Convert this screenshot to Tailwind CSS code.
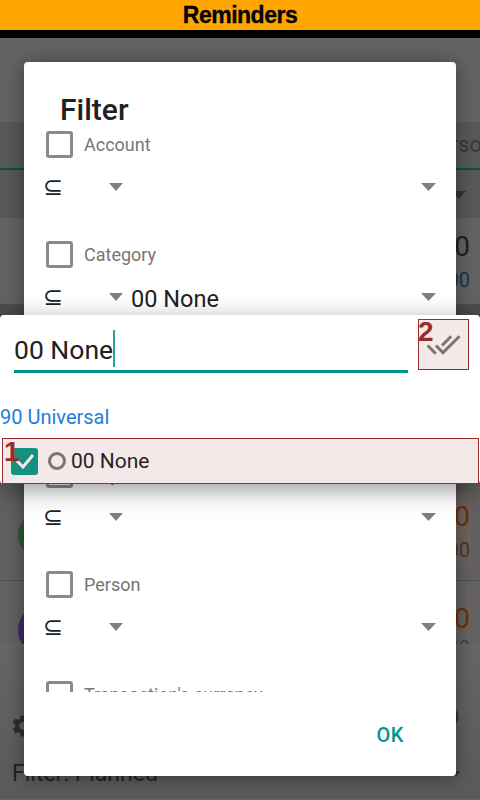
<!DOCTYPE html>
<html lang="en">
<head>
    <meta charset="UTF-8">
    <title>Reminders</title>
    <script src="https://cdn.jsdelivr.net/npm/@tailwindcss/browser@4"></script>
</head>
<body class="font-['Roboto',sans-serif] overflow-hidden bg-[#636363]">
<div class="relative w-[480px] h-[800px] overflow-hidden">

    <!-- app behind the dialog -->
    <header class="h-[38px] bg-[#ffa500] border-b-[8px] border-black text-center font-['Liberation_Sans',sans-serif] font-bold text-[23px] leading-[30px] text-black tracking-[-0.5px] [-webkit-text-stroke:0.3px_black]">Reminders</header>
    <div class="h-[84px] bg-[#636363]"></div>
    <div class="h-[48px] bg-[#585858] border-b-2 border-[#0b4f49] overflow-hidden pl-[451px] text-[21.5px] leading-[46px] text-[#383838] whitespace-nowrap">rson</div>
    <div class="h-[48px] bg-[#585858] pl-[452px] pt-[21px]">
        <svg class="block" width="14" height="8"><path d="M0 0h14L7 8z" fill="#333"/></svg>
    </div>
    <div class="h-[86px] bg-[#636363] pr-[10px] text-right">
        <div class="text-[28px] leading-[34px] pt-[12px] h-[50px] text-[#1f1f1f]">0</div>
        <div class="text-[20px] leading-[24px] text-[#1c3050]">00</div>
    </div>
    <div class="h-[16px] bg-[#4e4e4e]"></div>
    <div class="h-[261px] bg-[#616161] border-b border-[#505050] flex flex-col justify-end">
        <div class="flex items-center justify-between h-[91px] pl-[18px] pr-[9px]">
            <span class="w-[50px] h-[50px] rounded-full bg-[#2f5a30]"></span>
            <div class="w-[26px] h-[74px] bg-[#6e635c] mb-[9px] text-right pr-[1px]">
                <div class="text-[28px] leading-[34px] text-[#6b3208] mt-[7px]">0</div>
                <div class="text-[20px] leading-[24px] text-[#3a3a3a] mt-[4px]">00</div>
            </div>
        </div>
    </div>
    <div class="h-[63px] bg-[#636363] overflow-hidden flex justify-between pl-[18px] pr-[9px]">
        <span class="mt-[24px] w-[50px] h-[50px] rounded-full bg-[#3e2a66]"></span>
        <div class="w-[4px] h-[63px] bg-[#6e635c] relative">
            <div class="absolute right-[1px] top-[21px] text-[28px] leading-[34px] text-[#6b3208]">0</div>
            <div class="absolute right-[1px] top-[55px] text-[20px] leading-[24px] text-[#444]">00</div>
        </div>
    </div>
    <div class="h-[155px] bg-gradient-to-b from-[#666666] to-[#5a5a5a]">
        <div class="flex items-center justify-between pl-[10px] pr-[20px] pt-[52px] h-[112px]">
            <svg width="26" height="26" viewBox="0 0 24 24" fill="#2e2e2e"><path d="M19.14 12.94c.04-.3.06-.61.06-.94 0-.32-.02-.64-.07-.94l2.03-1.58c.18-.14.23-.41.12-.61l-1.92-3.32c-.12-.22-.37-.29-.59-.22l-2.39.96c-.5-.38-1.03-.7-1.62-.94l-.36-2.54c-.04-.24-.24-.41-.48-.41h-3.84c-.24 0-.43.17-.47.41l-.36 2.54c-.59.24-1.13.57-1.62.94l-2.39-.96c-.22-.08-.47 0-.59.22L2.74 8.87c-.12.21-.08.47.12.61l2.03 1.58c-.05.3-.09.63-.09.94s.02.64.07.94l-2.03 1.58c-.18.14-.23.41-.12.61l1.92 3.32c.12.22.37.29.59.22l2.39-.96c.5.38 1.03.7 1.62.94l.36 2.54c.05.24.24.41.48.41h3.84c.24 0 .44-.17.47-.41l.36-2.54c.59-.24 1.13-.56 1.62-.94l2.39.96c.22.08.47 0 .59-.22l1.92-3.32c.12-.22.07-.47-.12-.61l-2.01-1.58zM12 15.6c-1.98 0-3.6-1.62-3.6-3.6s1.62-3.6 3.6-3.6 3.6 1.62 3.6 3.6-1.62 3.6-3.6 3.6z"/></svg>
            <span class="text-[36px] leading-[36px] mb-[24px] text-[#333]">6</span>
        </div>
        <div class="flex items-center justify-between pl-[12px] pr-[20px] h-[30px] mt-[3px]">
            <span class="text-[23px] leading-[30px] text-[#222]">Filter: Planned</span>
            <svg width="8" height="6"><path d="M0 0h8L4 6z" fill="#333"/></svg>
        </div>
    </div>

    <!-- filter dialog -->
    <section class="absolute left-[24px] top-[62px] w-[432px] h-[714px] bg-white rounded-[4px] shadow-[0_2px_20px_rgba(0,0,0,0.4)] flex flex-col">
        <h2 class="ml-[36px] mt-[32px] text-[30px] leading-[32px] font-medium text-[#212121]">Filter</h2>
        <div class="h-[566px] overflow-hidden">

            <div class="h-[110px]">
                <div class="flex items-center h-[36px] pl-[22px]">
                    <span class="w-[27px] h-[27px] border-[3px] border-[#8a8a8a] rounded-[3px]"></span>
                    <span class="ml-[11px] mt-[1px] text-[18px] text-[#757575]">Account</span>
                </div>
                <div class="flex items-center h-[50px] pl-[19px] pr-[20px]">
                    <span class="w-[18px] font-['DejaVu_Sans',sans-serif] text-[24px] leading-[30px] text-[#222]">⊆</span>
                    <svg class="ml-[48px]" width="14" height="8"><path d="M0 0h14L7 8z" fill="#7f7f7f"/></svg>
                    <svg class="ml-auto" width="15" height="8"><path d="M0 0h15L7.5 8z" fill="#7f7f7f"/></svg>
                </div>
            </div>

            <div class="h-[110px]">
                <div class="flex items-center h-[36px] pl-[22px]">
                    <span class="w-[27px] h-[27px] border-[3px] border-[#8a8a8a] rounded-[3px]"></span>
                    <span class="ml-[11px] mt-[1px] text-[18px] text-[#757575]">Category</span>
                </div>
                <div class="flex items-center h-[50px] pl-[19px] pr-[20px]">
                    <span class="w-[18px] font-['DejaVu_Sans',sans-serif] text-[24px] leading-[30px] text-[#222]">⊆</span>
                    <svg class="ml-[48px]" width="14" height="8"><path d="M0 0h14L7 8z" fill="#7f7f7f"/></svg>
                    <span class="ml-[8px] mt-[5px] text-[23.5px] text-[#212121]">00 None</span>
                    <svg class="ml-auto" width="15" height="8"><path d="M0 0h15L7.5 8z" fill="#7f7f7f"/></svg>
                </div>
            </div>

            <!-- this row sits wholly under the popup -->
            <div class="h-[110px]"></div>

            <div class="h-[110px]">
                <div class="flex items-center h-[36px] pl-[22px]">
                    <span class="w-[27px] h-[27px] border-[3px] border-[#8a8a8a] rounded-[3px]"></span>
                    <span class="ml-[11px] mt-[1px] text-[18px] text-[#757575]">Project</span>
                </div>
                <div class="flex items-center h-[50px] pl-[19px] pr-[20px]">
                    <span class="w-[18px] font-['DejaVu_Sans',sans-serif] text-[24px] leading-[30px] text-[#222]">⊆</span>
                    <svg class="ml-[48px]" width="14" height="8"><path d="M0 0h14L7 8z" fill="#7f7f7f"/></svg>
                    <svg class="ml-auto" width="15" height="8"><path d="M0 0h15L7.5 8z" fill="#7f7f7f"/></svg>
                </div>
            </div>

            <div class="h-[110px]">
                <div class="flex items-center h-[36px] pl-[22px]">
                    <span class="w-[27px] h-[27px] border-[3px] border-[#8a8a8a] rounded-[3px]"></span>
                    <span class="ml-[11px] mt-[1px] text-[18px] text-[#757575]">Person</span>
                </div>
                <div class="flex items-center h-[50px] pl-[19px] pr-[20px]">
                    <span class="w-[18px] font-['DejaVu_Sans',sans-serif] text-[24px] leading-[30px] text-[#222]">⊆</span>
                    <svg class="ml-[48px]" width="14" height="8"><path d="M0 0h14L7 8z" fill="#7f7f7f"/></svg>
                    <svg class="ml-auto" width="15" height="8"><path d="M0 0h15L7.5 8z" fill="#7f7f7f"/></svg>
                </div>
            </div>

            <div class="flex items-center h-[36px] pl-[22px]">
                <span class="w-[27px] h-[27px] border-[3px] border-[#8a8a8a] rounded-[3px]"></span>
                <span class="ml-[11px] mt-[1px] text-[18px] text-[#757575]">Transaction's currency</span>
            </div>
        </div>
        <div class="flex justify-end pr-[52px] pt-[28px]">
            <span class="text-[20px] font-medium leading-[30px] text-[#009688] tracking-[0.5px]">OK</span>
        </div>
    </section>

    <!-- autocomplete popup over the dialog -->
    <section class="absolute left-0 top-[315px] w-[480px] h-[169px] bg-white rounded-[4px] shadow-[0_6px_24px_rgba(0,0,0,0.4)]">
        <div class="flex items-start h-[87px]">
            <div class="ml-[14px] mt-[10px] w-[394px] h-[48px] border-b-[3px] border-[#009688] flex items-start">
                <span class="text-[26.5px] leading-[50px] text-[#212121]">00 None</span>
                <span class="w-[2px] h-[37px] mt-[5px] bg-[#26a69a]"></span>
            </div>
            <div class="relative ml-[10px] mt-[4px] w-[51px] h-[51px] border border-[#9a2c2c] bg-[#f3e9e9] flex items-center justify-center">
                <span class="absolute left-[-1px] top-[-3px] font-['Liberation_Sans',sans-serif] font-bold text-[28px] leading-[30px] text-[#962d2d]">2</span>
                <svg width="35" height="35" viewBox="0 0 24 24" fill="#7d7370"><path d="M18 7l-1.41-1.41-6.34 6.34 1.41 1.41L18 7zm4.24-1.41L11.66 16.17 7.48 12l-1.41 1.41L11.66 19l12-12-1.42-1.41zM.41 13.41L6 19l1.41-1.41L1.83 12 .41 13.41z"/></svg>
            </div>
        </div>
        <div class="text-[20px] leading-[30px] text-[#1e7ed8]">90 Universal</div>
        <div class="relative mt-[6px] ml-[2px] w-[477px] h-[46px] border border-[#9a2c2c] bg-[#f3e9e9] flex items-center">
            <span class="absolute left-[1px] top-[-2px] font-['Liberation_Sans',sans-serif] font-bold text-[28px] leading-[30px] text-[#962d2d] z-10">1</span>
            <span class="ml-[8px] w-[27px] h-[27px] rounded-[3px] bg-[#14917f] flex items-center justify-center">
                <svg width="20" height="16" viewBox="0 0 20 16" fill="none" stroke="#f3e9e9" stroke-width="3"><path d="M2 8l6 6L18 2"/></svg>
            </span>
            <span class="ml-[10px] w-[18px] h-[18px] rounded-full border-[3px] border-[#7d7370]"></span>
            <span class="ml-[5px] mt-[1px] text-[21px] text-[#2a2220]">00 None</span>
        </div>
    </section>
</div>
</body>
</html>
